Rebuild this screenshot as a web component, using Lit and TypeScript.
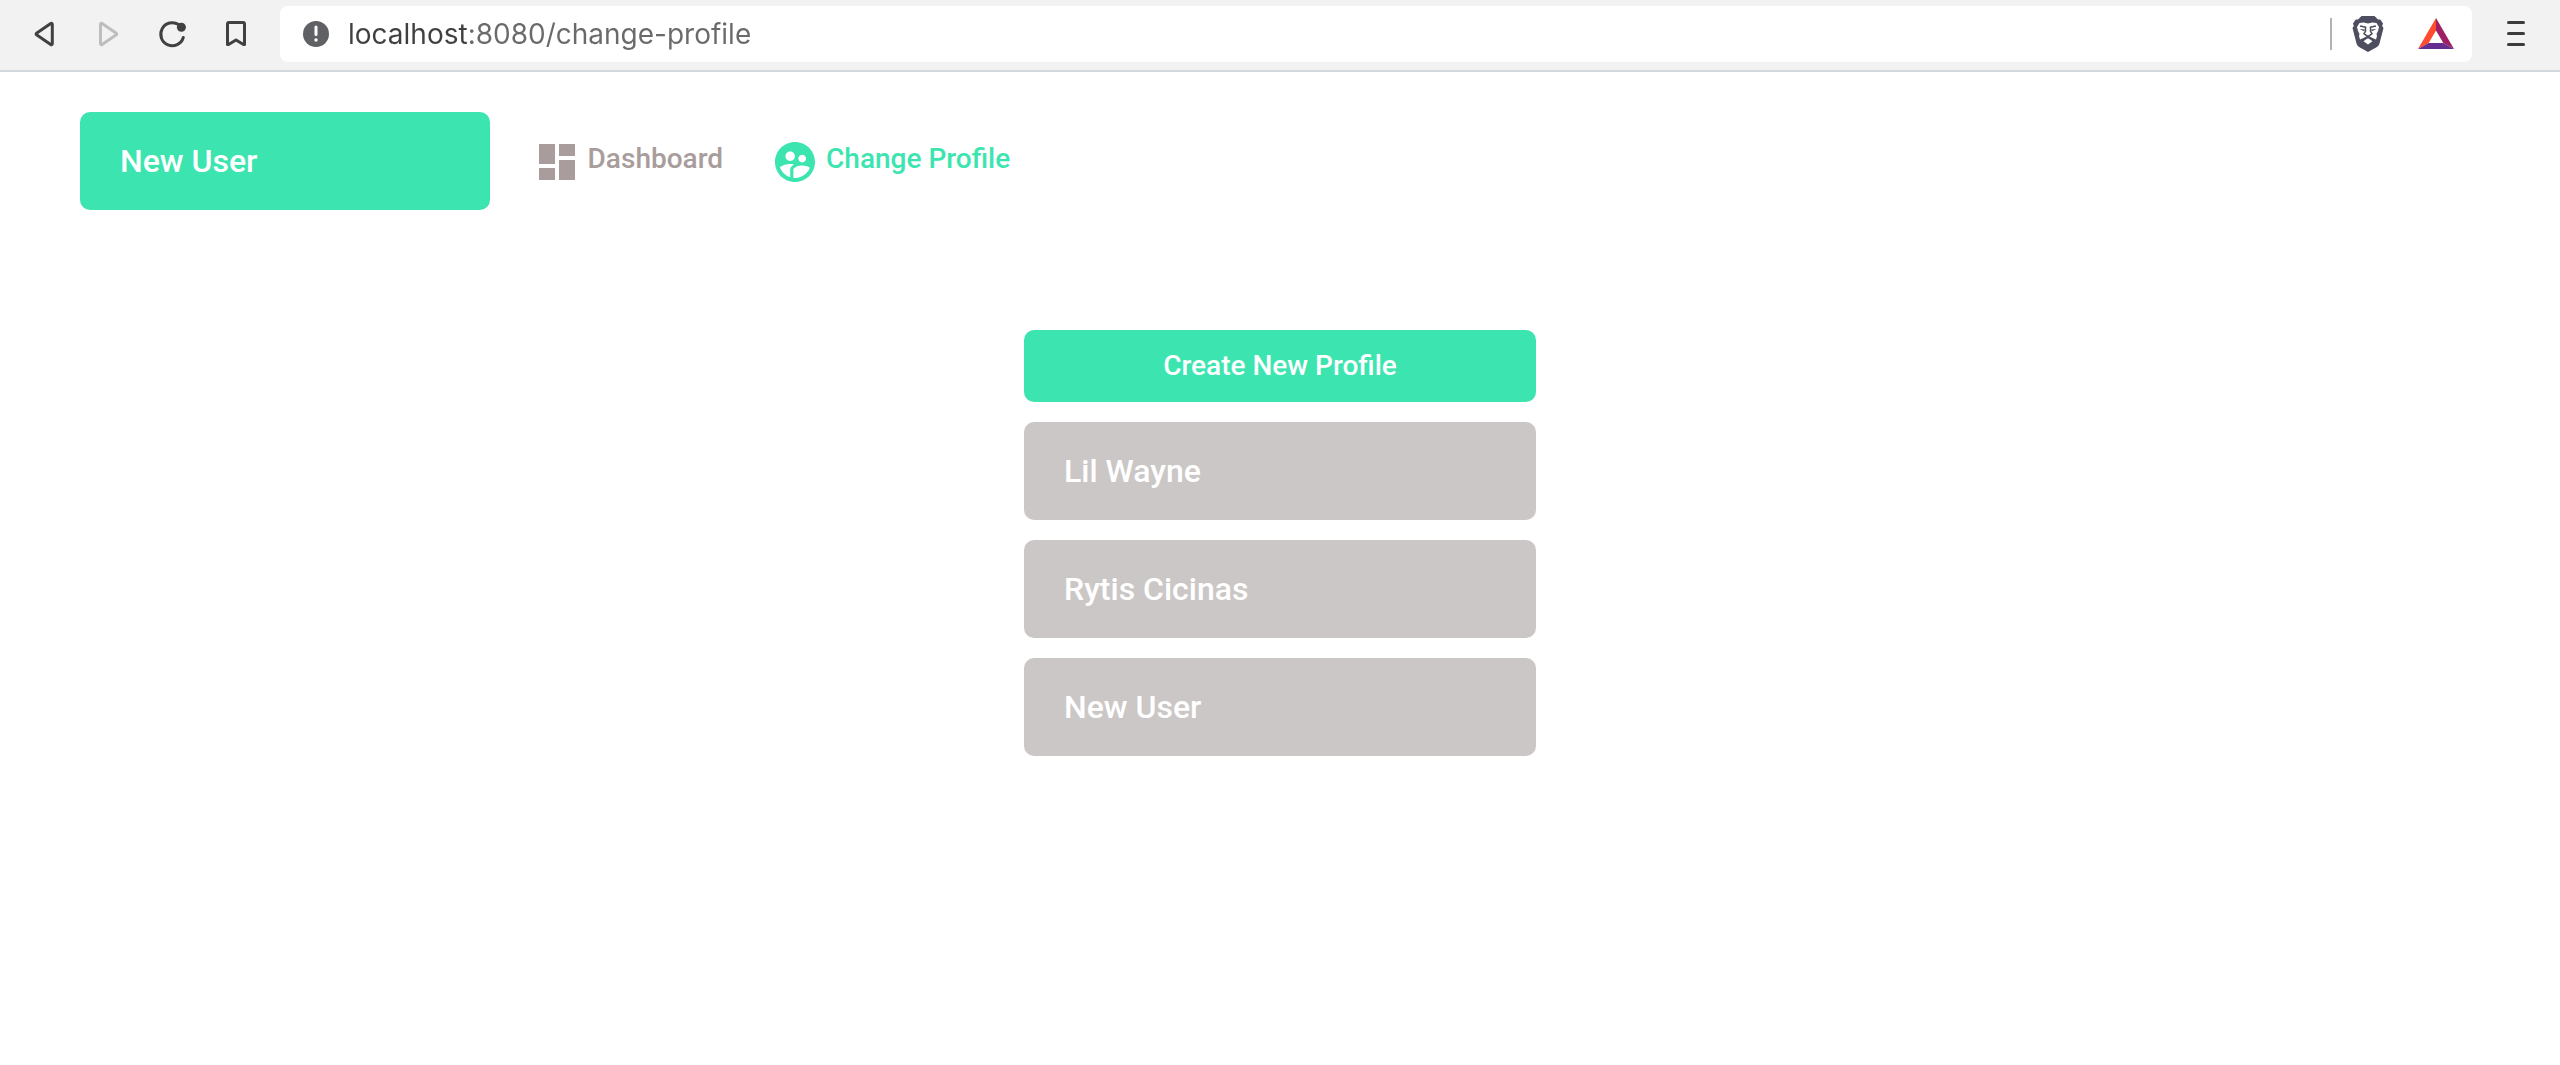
import { LitElement, html, css, svg } from "lit";
import { customElement, property, state } from "lit/decorators.js";

@customElement("browser-toolbar")
export class BrowserToolbar extends LitElement {
  @property() address = "";

  static styles = css`
    :host {
      display: block;
    }
    .bar {
      display: flex;
      align-items: center;
      background: #f2f2f2;
      border-bottom: 2px solid #d3d8dc;
      padding: 6px 20px 8px 20px;
    }
    .tools {
      display: flex;
      gap: 16px;
      padding-right: 20px;
    }
    .tool {
      display: flex;
      align-items: center;
      justify-content: center;
      width: 48px;
      height: 48px;
      padding: 0;
      border: 0;
      background: none;
      color: #414141;
      cursor: pointer;
    }
    .tool:disabled {
      color: #bebebe;
      cursor: default;
    }
    .icon {
      display: block;
      width: 32px;
      height: 32px;
    }
    .wide {
      width: 40px;
      height: 40px;
    }
    .field {
      display: flex;
      flex: 1;
      align-items: center;
      min-width: 0;
      height: 56px;
      background: #ffffff;
      border-radius: 8px;
      padding: 0 12px 0 12px;
    }
    .address {
      flex: 1;
      min-width: 0;
      height: 40px;
      padding: 0 0 0 8px;
      border: 0;
      outline: none;
      font: 400 28px/40px Inter, "Liberation Sans", sans-serif;
      background: linear-gradient(to right, #3f3f3f 129px, #6a6a6a 129px) text;
      -webkit-text-fill-color: transparent;
    }
    .divider {
      width: 2px;
      height: 32px;
      margin-right: 12px;
      background: #afb4b9;
    }
    .extensions {
      display: flex;
      gap: 20px;
    }
    .menu {
      margin: 0 0 0 20px;
    }
  `;

  render() {
    return html`
      <header class="bar">
        <div class="tools">
          <button class="tool" aria-label="Back">
            <svg class="icon" viewBox="0 0 32 32" fill="none" stroke="currentColor" stroke-width="3" stroke-linejoin="round">
              <path d="M24.3 6.3a1 1 0 0 0-1.6-.8L8.5 15.2a1 1 0 0 0 0 1.6l14.2 9.7a1 1 0 0 0 1.6-.8Z" />
            </svg>
          </button>
          <button class="tool" aria-label="Forward" disabled>
            <svg class="icon" viewBox="0 0 32 32" fill="none" stroke="currentColor" stroke-width="3" stroke-linejoin="round">
              <path d="M8.5 6.3a1 1 0 0 1 1.6-.8l14.2 9.7a1 1 0 0 1 0 1.6l-14.2 9.7a1 1 0 0 1-1.6-.8Z" />
            </svg>
          </button>
          <button class="tool" aria-label="Reload">
            <svg class="icon" viewBox="0 0 32 32" fill="none" stroke="currentColor" stroke-width="3" stroke-linecap="round">
              <path d="M22.6 6.6A11.5 11.5 0 1 0 27.3 19.5" />
              <circle cx="25.4" cy="9.3" r="4.5" fill="currentColor" stroke="none" />
            </svg>
          </button>
          <button class="tool" aria-label="Bookmark">
            <svg class="icon" viewBox="0 0 32 32" fill="none" stroke="currentColor" stroke-width="3" stroke-linejoin="round">
              <path d="M7.5 6a1.5 1.5 0 0 1 1.5-1.5h14A1.5 1.5 0 0 1 24.500 6v20.500l-1 0-7.500-4.500-7.500 4.500-1 0Z" />
            </svg>
          </button>
        </div>
        <div class="field">
          <button class="tool" aria-label="Site information">
            <svg class="icon" viewBox="0 0 32 32">
              <circle cx="16" cy="16" r="13" fill="#5f6164" />
              <path d="M16 9v7.500" stroke="#fff" stroke-width="3" stroke-linecap="round" />
              <circle cx="16" cy="22" r="1.700" fill="#fff" />
            </svg>
          </button>
          <input class="address" type="text" aria-label="Address" spellcheck="false" .value=${this.address} />
          <span class="divider"></span>
          <div class="extensions">
            <button class="tool" aria-label="Shields">
              <svg class="icon wide" viewBox="0 0 40 40">
                <path
                  fill="#4d4e5f"
                  d="M13.500 2h13l3.500 3.600 2.300-.2 2.700 4.100-.8 2.500 1.300 2-4 15.500c-.6 1.800-1.500 2.800-3 3.800L20 38l-8.500-4.700c-1.500-1-2.400-2-3-3.800L4.500 14l1.300-2L5 9.500l2.700-4.100 2.300.2Z"
                />
                <path
                  fill="#fff"
                  d="M11.500 9 15.500 8.500l4.500 1 4.500-1 4 .5 2.500 4-1 4-1.500 3 .5 2-1 3.500-3.500-1.500L20 21.500 15.500 24 12 25.500 11 22l.5-2L10 17l-1-4Z"
                />
                <path fill="#fff" d="m20 24 4.500 3.300L20 30.500l-4.500-3.200Z" />
                <path
                  fill="none"
                  stroke="#4d4e5f"
                  stroke-width="1.500"
                  d="m12 12 5.500 1.200v4l-1.500 2.500 4 2.800 4-2.800-1.500-2.500v-4L28 12M20 22v2.500"
                />
                <path fill="#4d4e5f" d="m11.500 15 5.500.5-1 1.800ZM28.500 15l-5.500.5 1 1.800Z" />
              </svg>
            </button>
            <button class="tool" aria-label="Rewards">
              <svg class="icon wide" viewBox="0 0 40 40">
                <path fill="#ff4b30" d="M20 4v12.500L12.700 29 2 35Z" />
                <path fill="#9e1f63" d="M20 4v12.500L27.300 29 38 35Z" />
                <path fill="#662d91" d="M12.700 29h14.600L38 35H2Z" />
              </svg>
            </button>
          </div>
        </div>
        <button class="tool menu" aria-label="Menu">
          <svg class="icon" viewBox="0 0 32 32" fill="none" stroke="#3c3c3c" stroke-width="3" stroke-linecap="round">
            <path d="M8.500 4.500h15M8.500 15.500h15M8.500 26.500h15" />
          </svg>
        </button>
      </header>
    `;
  }
}

const dashboardIcon = svg`<path d="M3 13h8V3H3v10zm0 8h8v-6H3v6zm10 0h8V11h-8v10zm0-18v6h8V3h-8z" />`;

const profileIcon = svg`<path
  d="M12 2C6.480 2 2 6.480 2 12s4.480 10 10 10 10-4.480 10-10S17.520 2 12 2zm3.610 6.340c1.070 0 1.930.86 1.930 1.930s-.86 1.930-1.930 1.930-1.930-.86-1.930-1.930c-.01-1.070.86-1.930 1.930-1.930zm-6-1.580c1.300 0 2.360 1.060 2.360 2.360s-1.060 2.360-2.360 2.360-2.360-1.060-2.360-2.360c0-1.310 1.050-2.360 2.360-2.360zm0 9.130v3.750c-2.400-.75-4.300-2.600-5.140-4.960 1.050-1.120 3.670-1.690 5.140-1.690.53 0 1.200.08 1.900.22-1.640.87-1.900 2.020-1.900 2.680zM12 20c-.27 0-.53-.01-.79-.04v-4.070c0-1.420 2.940-2.130 4.400-2.130 1.070 0 2.920.39 3.840 1.150C18.280 17.880 15.390 20 12 20z"
/>`;

@customElement("app-root")
export class AppRoot extends LitElement {
  @state() private current = "New User";

  private profiles = ["Lil Wayne", "Rytis Cicinas", "New User"];

  static styles = css`
    :host {
      display: block;
      min-height: 100vh;
      background: #ffffff;
      font-family: Roboto, "Liberation Sans", sans-serif;
      font-weight: 500;
    }
    .header {
      display: flex;
      align-items: center;
      gap: 43px;
      padding: 40px 80px;
    }
    .card {
      display: block;
      box-sizing: border-box;
      width: 100%;
      padding: 30px 40px;
      border: 0;
      border-radius: 10px;
      background: #cbc7c6;
      color: #ffffff;
      font: inherit;
      font-size: 32px;
      line-height: 38px;
      text-align: left;
    }
    .current {
      width: 16vw;
      background: #3ce5b0;
    }
    .nav {
      display: flex;
      gap: 48px;
      padding-top: 2px;
    }
    .link {
      display: flex;
      gap: 7px;
      color: #a89d9c;
      font-size: 28px;
      line-height: 42px;
      text-decoration: none;
    }
    .active {
      color: #3ce5b0;
    }
    .glyph {
      width: 48px;
      height: 48px;
      fill: currentColor;
    }
    .profiles {
      display: flex;
      flex-direction: column;
      gap: 20px;
      width: 20%;
      margin: 80px auto 0;
    }
    .card,
    .create {
      cursor: pointer;
    }
    .current {
      cursor: default;
    }
    .create {
      padding: 18px 40px;
      border: 0;
      border-radius: 10px;
      background: #3ce5b0;
      color: #ffffff;
      font: inherit;
      font-size: 28px;
      line-height: 36px;
    }
  `;

  render() {
    return html`
      <browser-toolbar address="localhost:8080/change-profile"></browser-toolbar>
      <div class="header">
        <div class="card current">${this.current}</div>
        <nav class="nav">
          <a class="link" href="#dashboard">
            <svg class="glyph" viewBox="0 0 24 24" aria-hidden="true">${dashboardIcon}</svg>
            <span>Dashboard</span>
          </a>
          <a class="link active" href="#change-profile" aria-current="page">
            <svg class="glyph" viewBox="0 0 24 24" aria-hidden="true">${profileIcon}</svg>
            <span>Change Profile</span>
          </a>
        </nav>
      </div>
      <main class="profiles">
        <button class="create">Create New Profile</button>
        ${this.profiles.map(
          (name) => html`<button class="card" @click=${() => (this.current = name)}>${name}</button>`
        )}
      </main>
    `;
  }
}
